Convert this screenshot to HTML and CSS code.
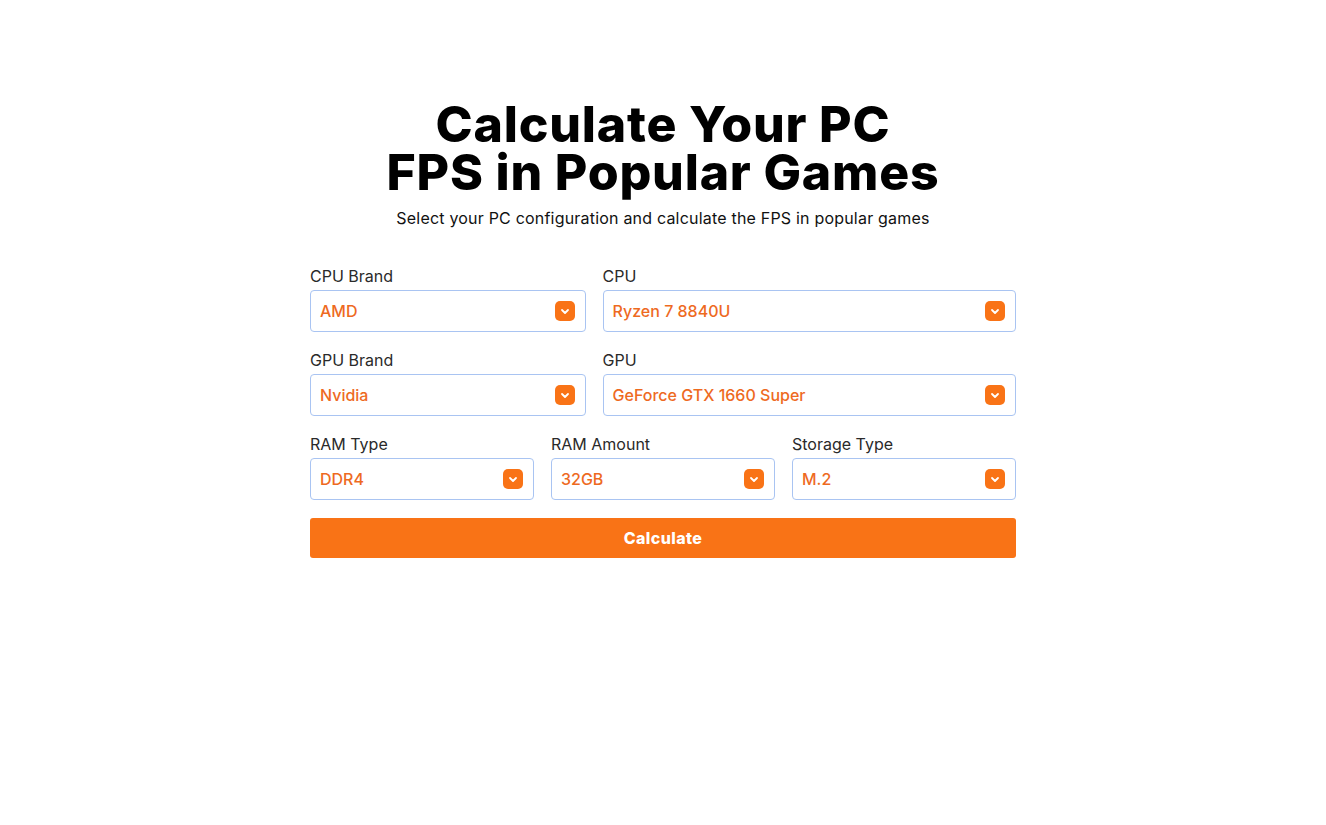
FILE: index.html
```html
<!DOCTYPE html>
<html lang="en">
<head>
<meta charset="utf-8">
<title>FPS Calculator</title>
<link rel="stylesheet" href="styles.css">
</head>
<body>
<main class="page">
  <h1 class="title">Calculate Your PC<br>FPS in Popular Games</h1>
  <p class="subtitle">Select your PC configuration and calculate the FPS in popular games</p>
  <form class="form">
    <div class="row row-2">
      <div class="field">
        <label class="label">CPU Brand</label>
        <div class="select"><span class="value">AMD</span><span class="chev"><svg viewBox="0 0 20 20" width="20" height="20"><path d="M7 9l3 3 3-3" fill="none" stroke="#fff" stroke-width="1.8" stroke-linecap="round" stroke-linejoin="round"/></svg></span></div>
      </div>
      <div class="field">
        <label class="label">CPU</label>
        <div class="select"><span class="value">Ryzen 7 8840U</span><span class="chev"><svg viewBox="0 0 20 20" width="20" height="20"><path d="M7 9l3 3 3-3" fill="none" stroke="#fff" stroke-width="1.8" stroke-linecap="round" stroke-linejoin="round"/></svg></span></div>
      </div>
    </div>
    <div class="row row-2">
      <div class="field">
        <label class="label">GPU Brand</label>
        <div class="select"><span class="value">Nvidia</span><span class="chev"><svg viewBox="0 0 20 20" width="20" height="20"><path d="M7 9l3 3 3-3" fill="none" stroke="#fff" stroke-width="1.8" stroke-linecap="round" stroke-linejoin="round"/></svg></span></div>
      </div>
      <div class="field">
        <label class="label">GPU</label>
        <div class="select"><span class="value">GeForce GTX 1660 Super</span><span class="chev"><svg viewBox="0 0 20 20" width="20" height="20"><path d="M7 9l3 3 3-3" fill="none" stroke="#fff" stroke-width="1.8" stroke-linecap="round" stroke-linejoin="round"/></svg></span></div>
      </div>
    </div>
    <div class="row row-3">
      <div class="field">
        <label class="label">RAM Type</label>
        <div class="select"><span class="value">DDR4</span><span class="chev"><svg viewBox="0 0 20 20" width="20" height="20"><path d="M7 9l3 3 3-3" fill="none" stroke="#fff" stroke-width="1.8" stroke-linecap="round" stroke-linejoin="round"/></svg></span></div>
      </div>
      <div class="field">
        <label class="label">RAM Amount</label>
        <div class="select"><span class="value">32GB</span><span class="chev"><svg viewBox="0 0 20 20" width="20" height="20"><path d="M7 9l3 3 3-3" fill="none" stroke="#fff" stroke-width="1.8" stroke-linecap="round" stroke-linejoin="round"/></svg></span></div>
      </div>
      <div class="field">
        <label class="label">Storage Type</label>
        <div class="select"><span class="value">M.2</span><span class="chev"><svg viewBox="0 0 20 20" width="20" height="20"><path d="M7 9l3 3 3-3" fill="none" stroke="#fff" stroke-width="1.8" stroke-linecap="round" stroke-linejoin="round"/></svg></span></div>
      </div>
    </div>
    <button type="button" class="btn">Calculate</button>
  </form>
</main>
</body>
</html>
```
FILE: styles.css
```css
* { box-sizing: border-box; }
html, body { margin: 0; padding: 0; background: #fff; }
body { font-family: Inter, "Noto Sans", sans-serif; color: #111; }
.page {
  width: 706px;
  margin: 0 auto;
  padding-top: 100px;
  display: flex;
  flex-direction: column;
  align-items: stretch;
}
.title {
  margin: 0;
  text-align: center;
  font-size: 50px;
  line-height: 48px;
  font-weight: 800;
  letter-spacing: 0.8px;
  color: #000;
}
.subtitle {
  margin: 10px 0 0;
  text-align: center;
  font-size: 16px;
  line-height: 24px;
  letter-spacing: 0.2px;
  color: #111;
}
.form {
  margin-top: 34px;
  display: flex;
  flex-direction: column;
  gap: 16px;
}
.row { display: grid; gap: 17px; }
.row-2 { grid-template-columns: 2fr 3fr; }
.row-3 { grid-template-columns: 1fr 1fr 1fr; }
.field { display: flex; flex-direction: column; gap: 2px; }
.label {
  font-size: 16px;
  line-height: 24px;
  color: #2a2a2a;
}
.select {
  height: 42px;
  border: 1px solid #a9c4f2;
  border-radius: 4px;
  display: flex;
  align-items: center;
  justify-content: space-between;
  padding: 0 10px 0 9px;
  background: #fff;
}
.value {
  color: #ee6a1f;
  font-size: 16px;
  font-weight: 500;
}
.chev {
  width: 20px;
  height: 20px;
  border-radius: 5px;
  background: #f97316;
  display: flex;
}
.btn {
  margin-top: 2px;
  height: 40px;
  border: none;
  border-radius: 3px;
  background: #f97316;
  color: #fff;
  font-family: Inter, sans-serif;
  font-size: 16px;
  font-weight: 800;
  letter-spacing: 0.4px;
}
```
